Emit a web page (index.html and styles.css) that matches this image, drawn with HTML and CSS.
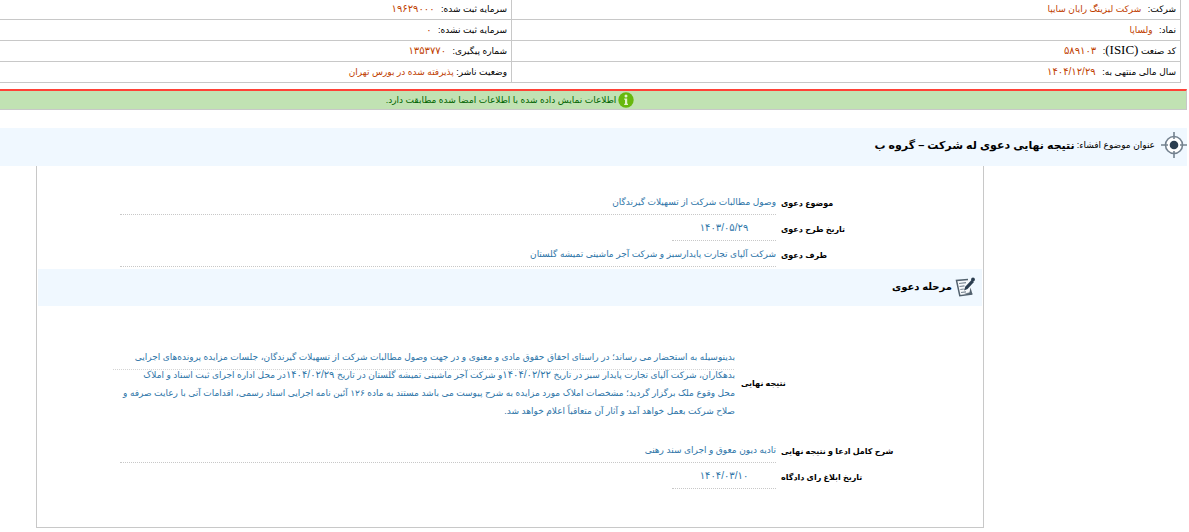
FILE: index.html
```html
<!DOCTYPE html>
<html lang="fa" dir="rtl">
<head>
<meta charset="utf-8">
<title>نتیجه نهایی دعوی له شرکت</title>
<link rel="stylesheet" href="styles.css">
</head>
<body>
<table class="company">
  <tbody>
    <tr>
      <td>شرکت: <span class="data">شرکت لیزینگ رایان سایپا</span></td>
      <td>سرمایه ثبت شده: <span class="data number">۱۹۶۲۹۰۰۰</span></td>
    </tr>
    <tr>
      <td>نماد: <span class="data">ولساپا</span></td>
      <td>سرمایه ثبت نشده: <span class="data number">۰</span></td>
    </tr>
    <tr>
      <td>کد صنعت <span class="latin">(ISIC)</span>: <span class="data number">۵۸۹۱۰۳</span></td>
      <td>شماره پیگیری: <span class="data number">۱۳۵۳۷۷۰</span></td>
    </tr>
    <tr>
      <td>سال مالی منتهی به: <span class="data number">۱۴۰۴/۱۲/۲۹</span></td>
      <td>وضعیت ناشر: <span class="data close">پذیرفته شده در بورس تهران</span></td>
    </tr>
  </tbody>
</table>

<div class="notice" role="status">
  <svg class="notice-icon" viewBox="0 0 16 16" aria-hidden="true">
    <circle cx="8" cy="8" r="7.7" fill="#67b80d"/>
    <circle cx="8" cy="4" r="1.5" fill="#e2f3cb"/>
    <path d="M6.2 6.5h3v5.2h.8v1.3H6.2v-1.3H7V7.8h-.8z" fill="#e2f3cb"/>
  </svg>
  <span>اطلاعات نمایش داده شده با اطلاعات امضا شده مطابقت دارد.</span>
</div>

<header class="subject">
  <svg class="subject-icon" viewBox="0 0 26 26" aria-hidden="true">
    <circle cx="13" cy="13" r="8.5" fill="#fff" stroke="#74828f" stroke-width="1.6"/>
    <path d="M13 0v7M13 19v7M0 13h7M19 13h7" stroke="#74828f" stroke-width="1.6"/>
    <circle cx="13" cy="13" r="4.3" fill="#2c3e50"/>
  </svg>
  <span class="subject-label">عنوان موضوع افشاء:</span>
  <h1>نتیجه نهایی دعوی له شرکت – گروه ب</h1>
</header>

<main class="panel">
  <dl class="fields">
    <dt>موضوع دعوی</dt>
    <dd>وصول مطالبات شرکت از تسهیلات گیرندگان</dd>
    <dt>تاریخ طرح دعوی</dt>
    <dd class="date">۱۴۰۳/۰۵/۲۹</dd>
    <dt>طرف دعوی</dt>
    <dd>شرکت آلپای تجارت پایدارسبز و شرکت آجر ماشینی تمیشه گلستان</dd>
  </dl>

  <div class="stage">
    <svg class="stage-icon" viewBox="0 0 20 20" aria-hidden="true">
      <path d="M1 3.500 14 2l3.500 15L5 19z" fill="#f7fafc"/>
      <path d="M13 2.500 1.500 3.500 4.800 18.700 17.300 17" fill="none" stroke="#52616e" stroke-width="1.500"/>
      <path d="M17.500 17.300 15.500 10.500 14.500 15.500 9 16.500z" fill="#52616e"/>
      <path d="M4 6.500l7-.8M4.500 9.500l5-.6M5.300 12.500l3.500-.5M6 15.500l5-.7" stroke="#7b8793" stroke-width="1.200"/>
      <path d="M9 13.500l1.200-3.800L16.500 3 19 5l-6.500 7z" fill="#2c3e50"/>
      <circle cx="18" cy="2.500" r="1.900" fill="#2c3e50"/>
    </svg>
    <h2>مرحله دعوی</h2>
  </div>

  <dl class="result">
    <dt>نتیجه نهایی</dt>
    <dd>بدینوسیله به استحضار می رساند؛ در راستای احقاق حقوق مادی و معنوی و در جهت وصول مطالبات شرکت از تسهیلات گیرندگان، جلسات مزایده پرونده‌های اجرایی<br>بدهکاران، شرکت آلپای تجارت پایدار سبز در تاریخ <span class="number">۱۴۰۴/۰۲/۲۲</span>و شرکت آجر ماشینی تمیشه گلستان در تاریخ <span class="number">۱۴۰۴/۰۲/۲۹</span>در محل اداره اجرای ثبت اسناد و املاک<br>محل وقوع ملک برگزار گردید؛ مشخصات املاک مورد مزایده به شرح پیوست می باشد مستند به ماده ۱۲۶ آئین نامه اجرایی اسناد رسمی، اقدامات آتی با رعایت صرفه و<br>صلاح شرکت بعمل خواهد آمد و آثار آن متعاقباً اعلام خواهد شد.</dd>
  </dl>

  <dl class="fields closing">
    <dt>شرح کامل ادعا و نتیجه نهایی</dt>
    <dd>تادیه دیون معوق و اجرای سند رهنی</dd>
    <dt>تاریخ ابلاغ رای دادگاه</dt>
    <dd class="date">۱۴۰۴/۰۳/۱۰</dd>
  </dl>
</main>
</body>
</html>
```
FILE: styles.css
```css
* { box-sizing: border-box; }

body {
  margin: 0;
  padding-right: 2px;
  background: #fff;
  color: #000;
  font: 9px/18px "Liberation Sans", "DejaVu Sans", sans-serif;
}

.company {
  width: calc(100% - 6px);
  margin-right: 6px;
  border-collapse: collapse;
  table-layout: fixed;
}

.company td {
  height: 21px;
  padding: 0 4px;
  border: 1px solid #c8c8c8;
  border-left: 0;
  line-height: 16px;
}

.company td:first-child { width: 669px; }
.company tr:first-child td { height: 19px; border-top: 0; }

.data { margin-right: 4px; color: #c04000; }
.data.close { margin-right: 0; }
.number { font-size: 10px; }
.latin { font-family: "Liberation Serif", serif; font-size: 13px; }

.notice {
  display: flex;
  align-items: center;
  justify-content: center;
  gap: 2px;
  height: 21px;
  margin-top: 6px;
  padding-right: 166px;
  border: 1px solid #c8c8c8;
  border-top: 2px solid #ff4136;
  border-left: 0;
  background: #c1e2b3;
  color: #006400;
}

.notice-icon { width: 16px; height: 16px; }

.subject {
  display: flex;
  align-items: center;
  gap: 2px;
  min-height: 38px;
  margin-top: 18px;
  padding-bottom: 4px;
  background: #f0f8ff;
}

.subject-icon { width: 26px; height: 26px; margin-left: 4px; }

h1, h2 { margin: 0; line-height: 20px; }
h1 { font-size: 11px; }
h2 { font-size: 10px; }

.panel {
  margin: 0 203px 0 36px;
  padding: 24px 1px 38px;
  border: 1px solid #c8c8c8;
  border-top: 0;
}

dl, dd { margin: 0; }
dt { font-size: 8px; font-weight: bold; }

.fields {
  display: grid;
  grid-template-columns: 201px 1fr;
  column-gap: 5px;
  row-gap: 1px;
  padding-left: 82px;
}

.fields dt { padding-top: 5px; text-align: left; }

.fields dd {
  height: 25px;
  padding-top: 3px;
  border-bottom: 1px dotted #c8c8c8;
  color: #2e75a8;
}

.fields .date { width: 104px; font-size: 10px; text-align: center; }

.stage {
  display: flex;
  align-items: center;
  gap: 3px;
  min-height: 37px;
  margin-top: 2px;
  padding-right: 7px;
  background: #f0f8ff;
}

.stage-icon { width: 20px; height: 20px; }

.result {
  display: grid;
  grid-template-columns: 241px 1fr;
  align-items: center;
  column-gap: 6px;
  margin-top: 42px;
  padding-left: 74px;
}

.result dt { text-align: left; }

.result dd {
  background: linear-gradient(to left, #d4d4d4 50%, transparent 50%) 0 21px / 2px 1px repeat-x;
  color: #2e75a8;
  white-space: nowrap;
}

.closing { margin-top: 18px; }
```
